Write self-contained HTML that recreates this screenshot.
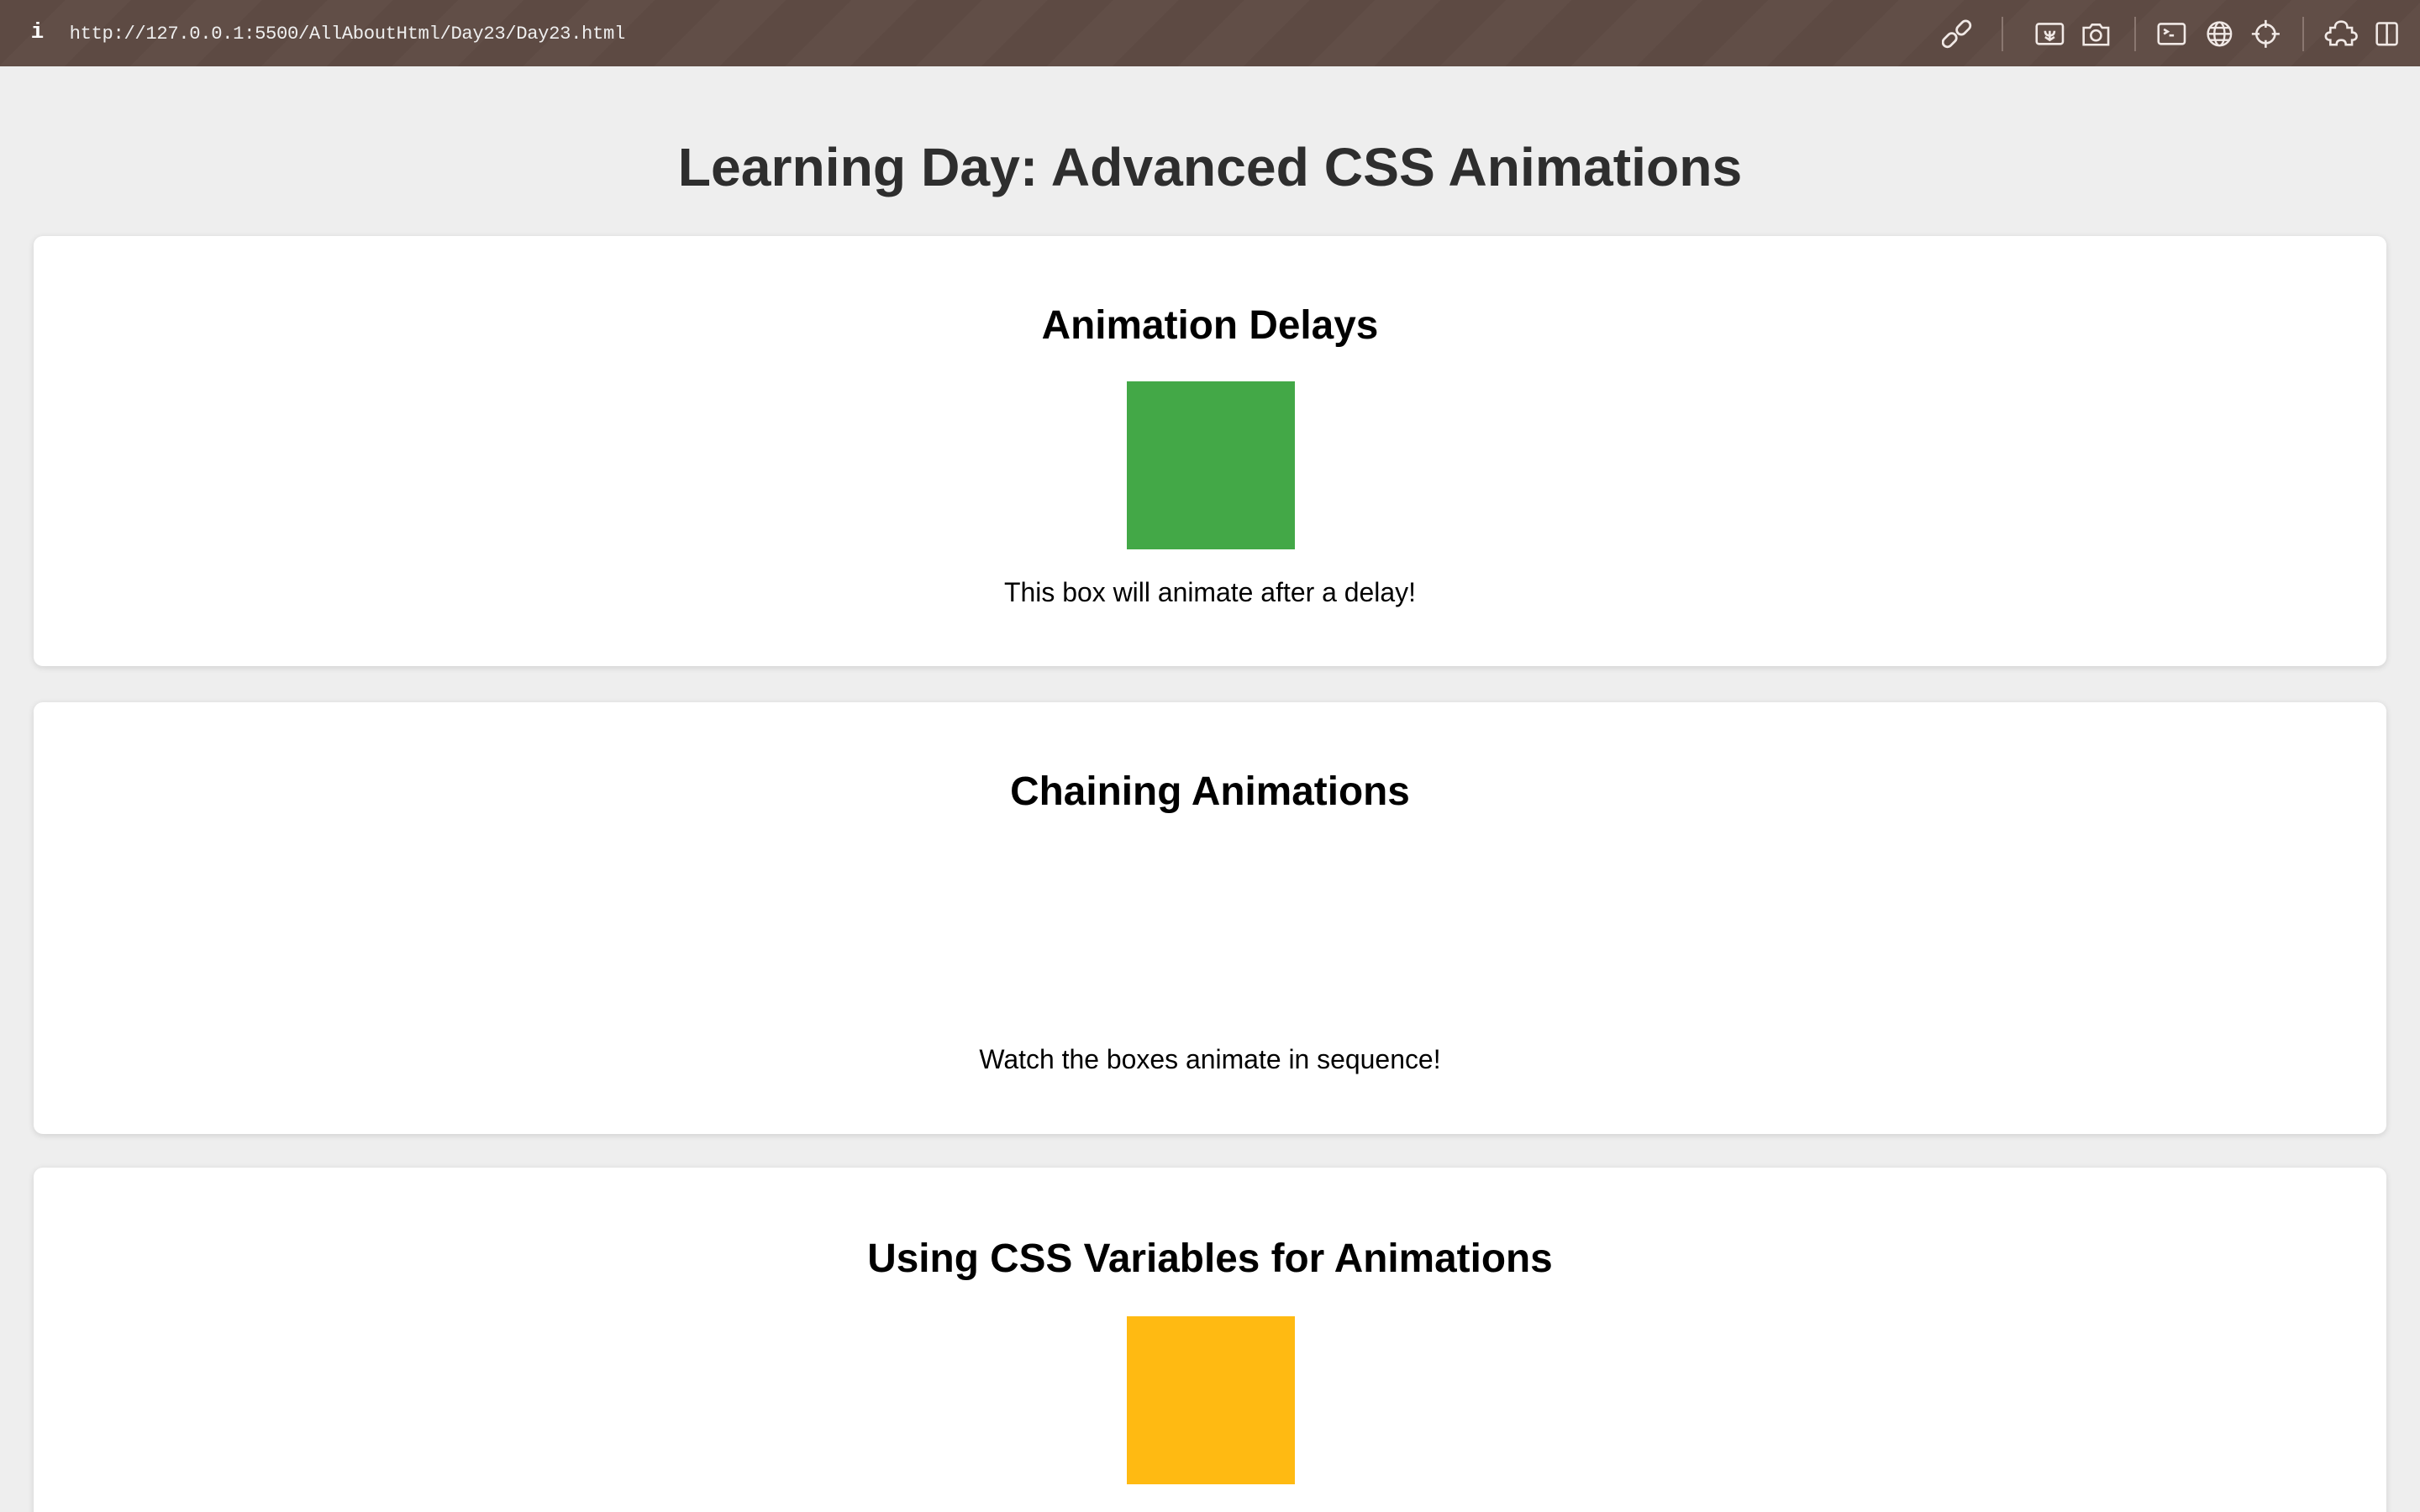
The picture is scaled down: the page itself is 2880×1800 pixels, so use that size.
<!DOCTYPE html>
<html><head><meta charset="utf-8"><style>
html,body{margin:0;padding:0;}
body{width:2880px;height:1800px;overflow:hidden;background:#eeeeee;font-family:"Liberation Sans",Arial,sans-serif;}
#w{zoom:1.836735;width:1568px;height:980px;position:relative;overflow:hidden;}
.bar{position:absolute;left:0;top:0;width:1568px;height:43px;background:repeating-linear-gradient(135deg,#5d4a43 0 30px,#614e47 30px 60px);}
.url{position:absolute;left:45px;top:15px;font:12.1px "Liberation Mono",monospace;color:#eee;letter-spacing:-0.2px;}
.info{position:absolute;left:20px;top:13px;font:bold 14px "Liberation Mono",monospace;color:#fff;}
.ic{position:absolute;top:12px;}
.sep{position:absolute;top:11px;width:1px;height:22px;background:#8a7770;}
h1{position:absolute;left:0;width:1568px;top:89px;margin:0;text-align:center;font-size:35px;font-weight:bold;color:#2e2e2e;line-height:40px;}
.card{position:absolute;left:22px;width:1524px;background:#fff;border-radius:6px;box-shadow:0 1px 4px rgba(0,0,0,.12);}
.card h2{position:absolute;left:0;width:100%;margin:0;text-align:center;font-size:26px;font-weight:bold;color:#000;line-height:30px;}
.card p{position:absolute;left:0;width:100%;margin:0;text-align:center;font-size:17.4px;color:#000;line-height:20px;}
.box{position:absolute;left:708px;width:109px;height:109px;}
</style></head><body><div id="w">
<div class="bar">
<div class="info">i</div>
<div class="url">http://127.0.0.1:5500/AllAboutHtml/Day23/Day23.html</div>
<svg class="ic" style="left:1258px" width="20" height="20" viewBox="0 0 20 20" fill="none" stroke="#f1e9e6" stroke-width="1.5"><rect x="2" y="9" width="6" height="10" rx="3" transform="rotate(45 5 14)"/><rect x="11" y="1" width="6" height="10" rx="3" transform="rotate(45 14 6)"/></svg>
<div class="sep" style="left:1297px"></div>
<svg class="ic" style="left:1318px" width="20" height="20" viewBox="0 0 20 20" fill="none" stroke="#f1e9e6" stroke-width="1.4"><rect x="1.5" y="3.5" width="17" height="13" rx="1.5"/><path d="M10 8v6M7 8c0 2 1 3 3 3s3-1 3-3M7 12l3 2 3-2"/></svg>
<svg class="ic" style="left:1348px" width="20" height="20" viewBox="0 0 20 20" fill="none" stroke="#f1e9e6" stroke-width="1.4"><path d="M2 6h4l1.5-2h5L14 6h4v11H2z"/><circle cx="10" cy="11" r="3.3"/></svg>
<div class="sep" style="left:1383px"></div>
<svg class="ic" style="left:1397px" width="20" height="20" viewBox="0 0 20 20" fill="none" stroke="#f1e9e6" stroke-width="1.4"><rect x="1.5" y="3.5" width="17" height="13" rx="1.5"/><path d="M5 7l2.5 1.5L5 10M8.5 11h3"/></svg>
<svg class="ic" style="left:1428px" width="20" height="20" viewBox="0 0 20 20" fill="none" stroke="#f1e9e6" stroke-width="1.3"><circle cx="10" cy="10" r="7.5"/><ellipse cx="10" cy="10" rx="3.3" ry="7.5"/><path d="M2.5 10h15M4 6h12M4 14h12"/></svg>
<svg class="ic" style="left:1458px" width="20" height="20" viewBox="0 0 20 20" fill="none" stroke="#f1e9e6" stroke-width="1.4"><circle cx="10" cy="10" r="6"/><path d="M10 1v5M10 14v5M1 10h5M14 10h5"/></svg>
<div class="sep" style="left:1492px"></div>
<svg class="ic" style="left:1506px" width="22" height="20" viewBox="0 0 22 20" fill="none" stroke="#f1e9e6" stroke-width="1.4"><path d="M4 6h3c0-3 2-4 4-4s4 1 4 4h3v3c2 0 3 1 3 2.5S20 14 18 14v3h-4c0-2-1-3-3-3s-3 1-3 3H4v-3c-2 0-3-1-3-2.5S2 9 4 9z"/></svg>
<svg class="ic" style="left:1538px" width="18" height="20" viewBox="0 0 18 20" fill="none" stroke="#f1e9e6" stroke-width="1.4"><rect x="2" y="3" width="13" height="14" rx="1.5"/><path d="M8.5 3v14"/></svg>
</div>
<h1>Learning Day: Advanced CSS Animations</h1>
<div class="card" style="top:153px;height:279px">
<h2 style="top:43px">Animation Delays</h2>
<div class="box" style="top:94px;background:#43a847"></div>
<p style="top:221px">This box will animate after a delay!</p>
</div>
<div class="card" style="top:455px;height:280px">
<h2 style="top:43px">Chaining Animations</h2>
<p style="top:222px">Watch the boxes animate in sequence!</p>
</div>
<div class="card" style="top:757px;height:300px">
<h2 style="top:44px">Using CSS Variables for Animations</h2>
<div class="box" style="top:96px;background:#ffba12"></div>
</div>
</div></body></html>
